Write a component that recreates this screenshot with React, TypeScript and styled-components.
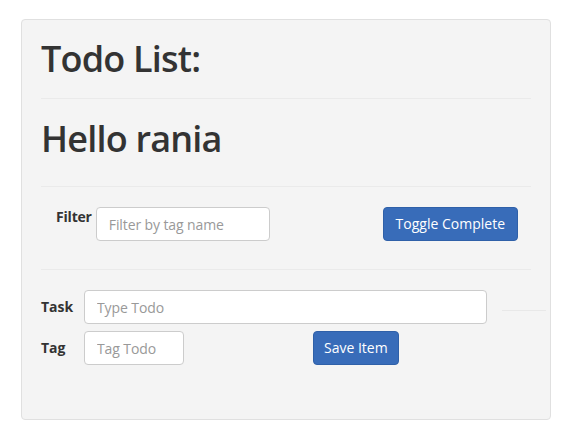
import React from "react";
import styled, { createGlobalStyle } from "styled-components";

const Global = createGlobalStyle`
  html, body { margin: 0; padding: 0; background: #fff; }
  body {
    font-family: "Open Sans", "Noto Sans", "Liberation Sans", sans-serif;
    font-size: 14px;
    line-height: 20px;
    color: #333;
  }
  * { box-sizing: border-box; }
`;

const Page = styled.div`
  padding: 19px 22px 0 21px;
  width: 572px;
`;

const Well = styled.div`
  width: 530px;
  height: 401px;
  background: #f4f4f4;
  border: 1px solid #e0e0e0;
  border-radius: 4px;
  padding: 19px;
`;

const Heading = styled.h1`
  margin: 0;
  font-size: 36px;
  line-height: 40px;
  font-weight: 600;
  color: #333;
  letter-spacing: -0.8px;
`;

const Rule = styled.hr<{ $top: number; $bottom: number }>`
  border: 0;
  border-top: 1px solid #eaeaea;
  margin: ${(p) => p.$top}px 0 ${(p) => p.$bottom}px;
`;

const FilterRow = styled.div`
  display: flex;
  align-items: flex-start;
  padding-left: 15px;
  padding-right: 13px;
  height: 34px;
`;

const Label = styled.label<{ $w?: number }>`
  font-weight: 700;
  font-size: 14px;
  color: #333;
  width: ${(p) => (p.$w ? `${p.$w}px` : "auto")};
  flex: none;
`;

const FilterLabel = styled(Label)`
  margin-right: 4px;
  letter-spacing: -0.2px;
`;

const Input = styled.input<{ $w: number }>`
  width: ${(p) => p.$w}px;
  height: 34px;
  padding: 6px 12px;
  font-family: inherit;
  font-size: 14px;
  color: #555;
  background: #fff;
  border: 1px solid #ccc;
  border-radius: 4px;
  outline: none;
  letter-spacing: -0.1px;
  &::placeholder { color: #999; }
`;

const Button = styled.button`
  height: 34px;
  padding: 6px 12px;
  font-family: inherit;
  font-size: 14px;
  line-height: 20px;
  color: #fff;
  background: #386cb9;
  border: 1px solid #2f60a8;
  border-radius: 4px;
  letter-spacing: 0;
  cursor: pointer;
`;

const Spacer = styled.div`
  flex: 1;
`;

const Form = styled.div`
  display: flex;
  flex-direction: column;
  gap: 7px;
`;

const FormRow = styled.div`
  display: flex;
  align-items: center;
`;

const StrayLine = styled.div`
  width: 44px;
  margin-left: 15px;
  border-top: 1px solid #e8e8e8;
  margin-top: 6px;
  margin-right: -16px;
`;

const SaveButton = styled(Button)`
  margin-left: 129px;
  padding: 6px 10px;
`;

export default function App() {
  return (
    <>
      <Global />
      <Page>
        <Well>
          <Heading>Todo List:</Heading>
          <Rule $top={19} $bottom={20} />
          <Heading>Hello rania</Heading>
          <Rule $top={27} $bottom={20} />
          <FilterRow>
            <FilterLabel>Filter</FilterLabel>
            <Input $w={174} placeholder="Filter by tag name" />
            <Spacer />
            <Button>Toggle Complete</Button>
          </FilterRow>
          <Rule $top={28} $bottom={20} />
          <Form>
            <FormRow>
              <Label $w={43}>Task</Label>
              <Input $w={403} placeholder="Type Todo" />
              <StrayLine />
            </FormRow>
            <FormRow>
              <Label $w={43}>Tag</Label>
              <Input $w={100} placeholder="Tag Todo" />
              <SaveButton>Save Item</SaveButton>
            </FormRow>
          </Form>
        </Well>
      </Page>
    </>
  );
}
